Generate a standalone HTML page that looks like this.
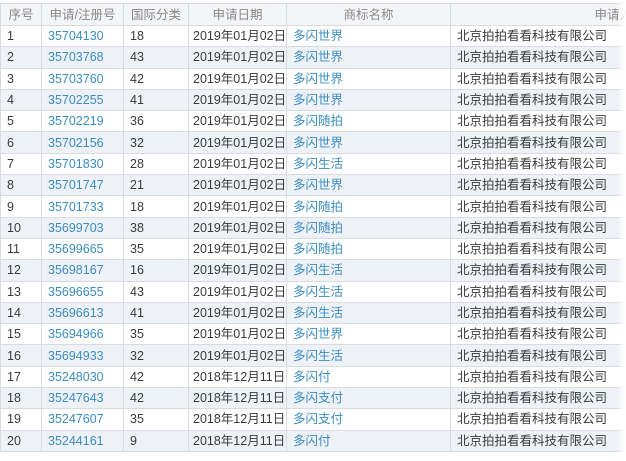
<!DOCTYPE html>
<html><head><meta charset="utf-8"><style>
body{margin:0;background:#fff;width:626px;height:461px;overflow:hidden;font-family:"Liberation Sans","Noto Sans CJK SC",sans-serif;font-size:12.5px;color:#3a3a3a}
table{position:absolute;left:0;top:3px;border-collapse:collapse;table-layout:fixed;width:640px}
td,th{border:1px solid #d8dce2;padding:0 0 0 6px;height:20.3px;line-height:20px;white-space:nowrap;overflow:hidden}
td:nth-child(4){padding-left:4px}
th{height:21px;font-weight:normal;color:#888;background:#f4f5f7;text-align:center;padding:0}
tr:nth-child(odd) td{background:#eef1f6}
a{color:#3a8dc2;text-decoration:none}
.fade{position:absolute;left:619px;top:0;width:7px;height:461px;background:linear-gradient(to right,rgba(255,255,255,.4),#fff)}
</style></head><body>
<table>
<colgroup><col style="width:41px"><col style="width:82px"><col style="width:65px"><col style="width:98px"><col style="width:164px"><col style="width:190px"></colgroup>
<tr><th>序号</th><th>申请/注册号</th><th>国际分类</th><th>申请日期</th><th>商标名称</th><th style="text-align:right;padding-right:8px">申请人</th></tr>
<tr><td>1</td><td><a>35704130</a></td><td>18</td><td>2019年01月02日</td><td><a>多闪世界</a></td><td>北京拍拍看看科技有限公司</td></tr>
<tr><td>2</td><td><a>35703768</a></td><td>43</td><td>2019年01月02日</td><td><a>多闪世界</a></td><td>北京拍拍看看科技有限公司</td></tr>
<tr><td>3</td><td><a>35703760</a></td><td>42</td><td>2019年01月02日</td><td><a>多闪世界</a></td><td>北京拍拍看看科技有限公司</td></tr>
<tr><td>4</td><td><a>35702255</a></td><td>41</td><td>2019年01月02日</td><td><a>多闪世界</a></td><td>北京拍拍看看科技有限公司</td></tr>
<tr><td>5</td><td><a>35702219</a></td><td>36</td><td>2019年01月02日</td><td><a>多闪随拍</a></td><td>北京拍拍看看科技有限公司</td></tr>
<tr><td>6</td><td><a>35702156</a></td><td>32</td><td>2019年01月02日</td><td><a>多闪世界</a></td><td>北京拍拍看看科技有限公司</td></tr>
<tr><td>7</td><td><a>35701830</a></td><td>28</td><td>2019年01月02日</td><td><a>多闪生活</a></td><td>北京拍拍看看科技有限公司</td></tr>
<tr><td>8</td><td><a>35701747</a></td><td>21</td><td>2019年01月02日</td><td><a>多闪世界</a></td><td>北京拍拍看看科技有限公司</td></tr>
<tr><td>9</td><td><a>35701733</a></td><td>18</td><td>2019年01月02日</td><td><a>多闪随拍</a></td><td>北京拍拍看看科技有限公司</td></tr>
<tr><td>10</td><td><a>35699703</a></td><td>38</td><td>2019年01月02日</td><td><a>多闪随拍</a></td><td>北京拍拍看看科技有限公司</td></tr>
<tr><td>11</td><td><a>35699665</a></td><td>35</td><td>2019年01月02日</td><td><a>多闪随拍</a></td><td>北京拍拍看看科技有限公司</td></tr>
<tr><td>12</td><td><a>35698167</a></td><td>16</td><td>2019年01月02日</td><td><a>多闪生活</a></td><td>北京拍拍看看科技有限公司</td></tr>
<tr><td>13</td><td><a>35696655</a></td><td>43</td><td>2019年01月02日</td><td><a>多闪生活</a></td><td>北京拍拍看看科技有限公司</td></tr>
<tr><td>14</td><td><a>35696613</a></td><td>41</td><td>2019年01月02日</td><td><a>多闪生活</a></td><td>北京拍拍看看科技有限公司</td></tr>
<tr><td>15</td><td><a>35694966</a></td><td>35</td><td>2019年01月02日</td><td><a>多闪世界</a></td><td>北京拍拍看看科技有限公司</td></tr>
<tr><td>16</td><td><a>35694933</a></td><td>32</td><td>2019年01月02日</td><td><a>多闪生活</a></td><td>北京拍拍看看科技有限公司</td></tr>
<tr><td>17</td><td><a>35248030</a></td><td>42</td><td>2018年12月11日</td><td><a>多闪付</a></td><td>北京拍拍看看科技有限公司</td></tr>
<tr><td>18</td><td><a>35247643</a></td><td>42</td><td>2018年12月11日</td><td><a>多闪支付</a></td><td>北京拍拍看看科技有限公司</td></tr>
<tr><td>19</td><td><a>35247607</a></td><td>35</td><td>2018年12月11日</td><td><a>多闪支付</a></td><td>北京拍拍看看科技有限公司</td></tr>
<tr><td>20</td><td><a>35244161</a></td><td>9</td><td>2018年12月11日</td><td><a>多闪付</a></td><td>北京拍拍看看科技有限公司</td></tr>
</table>
<div class="fade"></div>
</body></html>
